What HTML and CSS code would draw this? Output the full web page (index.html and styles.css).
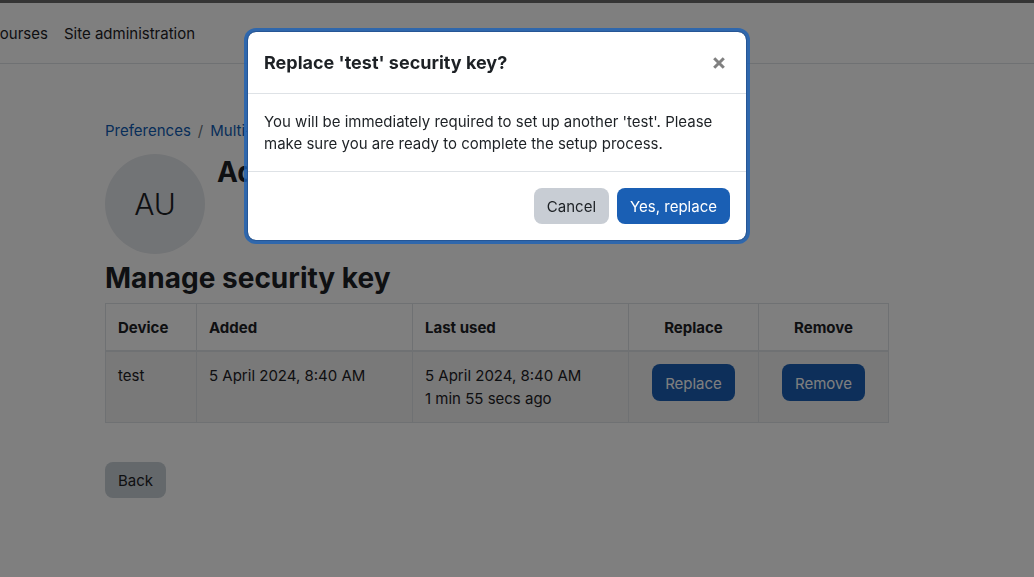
FILE: index.html
```html
<!DOCTYPE html>
<html lang="en">
<head>
  <meta charset="UTF-8" />
  <meta name="viewport" content="width=device-width, initial-scale=1" />
  <title>Manage security key</title>
  <link rel="stylesheet" href="styles.css">
</head>
<body>
  <header class="navbar">
    <nav class="primary-nav">
      <a href="#">My courses</a>
      <a href="#">Site administration</a>
    </nav>
  </header>

  <main class="page">
    <nav class="breadcrumb" aria-label="Breadcrumb">
      <a href="#">Preferences</a>
      <span class="divider">/</span>
      <a href="#">Multi-factor</a>
    </nav>

    <div class="user-header">
      <span class="avatar">AU</span>
      <h1>Admin User</h1>
    </div>

    <h2>Manage security key</h2>

    <table class="factors">
      <colgroup>
        <col class="col-device" />
        <col class="col-date" />
        <col class="col-date" />
        <col class="col-action" />
        <col class="col-action" />
      </colgroup>
      <thead>
        <tr>
          <th>Device</th>
          <th>Added</th>
          <th>Last used</th>
          <th class="action">Replace</th>
          <th class="action">Remove</th>
        </tr>
      </thead>
      <tbody>
        <tr>
          <td>test</td>
          <td>5 April 2024, 8:40 AM</td>
          <td>5 April 2024, 8:40 AM<br />1 min 55 secs ago</td>
          <td class="action"><button type="button" class="btn btn-primary">Replace</button></td>
          <td class="action"><button type="button" class="btn btn-primary">Remove</button></td>
        </tr>
      </tbody>
    </table>

    <button type="button" class="btn btn-back">Back</button>
  </main>

  <div class="modal-backdrop">
    <div class="modal" role="dialog" aria-modal="true" aria-labelledby="modal-title">
      <div class="modal-header">
        <h5 id="modal-title">Replace 'test' security key?</h5>
        <button type="button" class="close" aria-label="Close">
          <svg width="12" height="12" viewBox="0 0 12 12" aria-hidden="true">
            <path d="M1.2 1.2l9.6 9.6M10.8 1.2l-9.6 9.6" />
          </svg>
        </button>
      </div>
      <div class="modal-body">
        You will be immediately required to set up another 'test'. Please make sure you are ready to complete the setup process.
      </div>
      <div class="modal-footer">
        <button type="button" class="btn btn-secondary">Cancel</button>
        <button type="button" class="btn btn-primary">Yes, replace</button>
      </div>
    </div>
  </div>
</body>
</html>
```
FILE: styles.css
```css
* {
  box-sizing: border-box;
}
body {
  margin: 0;
  font-family: Inter, "Liberation Sans", sans-serif;
  font-size: 15px;
  line-height: 22px;
  color: #1d2125;
  background: white;
  border-top: 3px solid #6a6a6a;
}
a {
  color: #0f5cb4;
  text-decoration: none;
}
h1, h2, h5 {
  margin: 0;
  font-weight: 700;
}
h1, h2 {
  font-size: 28px;
  line-height: 36px;
}

/* Top bar */
.navbar {
  padding: 20px 0 18px;
  border-bottom: 1px solid #dee2e6;
  overflow: hidden;
}
.primary-nav {
  display: flex;
  gap: 16px;
  margin-left: -35px;
  white-space: nowrap;
}
.primary-nav a {
  color: #1d2125;
}

/* Page content */
.page {
  max-width: 824px;
  margin: 0 auto;
  padding: 56px 40px 0 0;
}
.breadcrumb {
  display: flex;
  gap: 7px;
  margin-bottom: 12px;
}
.divider {
  color: #6a737b;
}
.user-header {
  display: flex;
  gap: 12px;
  margin-bottom: 6px;
}
.avatar {
  display: flex;
  justify-content: center;
  align-items: center;
  width: 100px;
  height: 100px;
  border-radius: 50%;
  background: #e5e8ec;
  font-size: 30px;
  font-weight: 300;
}
.factors {
  width: 100%;
  margin: 7px 0 39px;
  border-collapse: collapse;
  table-layout: fixed;
  line-height: 23px;
}
.factors th,
.factors td {
  padding: 12px;
  border: 1px solid #dee2e6;
  text-align: left;
  vertical-align: top;
}
.factors thead th {
  padding-bottom: 11px;
  border-bottom-width: 2px;
}
.factors tbody tr {
  background: #f2f2f2;
}
.factors .action {
  text-align: center;
}
.col-device {
  width: 91px;
}
.col-date {
  width: 216px;
}

/* Buttons */
.btn {
  padding: 7px 12px 5px;
  font: inherit;
  border: 1px solid transparent;
  border-radius: 8px;
  cursor: pointer;
}
.btn-primary {
  color: white;
  background: #1a5fb4;
}
.btn-secondary {
  color: #1d2125;
  background: #c8cdd4;
}
.btn-back {
  color: #1d2125;
  background: #c8d0d6;
}

/* Confirmation dialog */
.modal-backdrop {
  position: fixed;
  inset: 0;
  display: flex;
  justify-content: center;
  align-items: flex-start;
  padding: 31px 40px 0 0;
  background: rgba(0,0,0,0.5);
}
.modal {
  width: 100%;
  max-width: 500px;
  background: white;
  background-clip: padding-box;
  border: 1px solid #265695;
  border-radius: 9px;
  box-shadow: 0 0 0 3px rgba(28,98,184,0.8);
}
.modal-header {
  display: flex;
  justify-content: space-between;
  align-items: center;
  padding: 16px;
  border-bottom: 1px solid #dee2e6;
}
.modal-header h5 {
  font-size: 18px;
  line-height: 29px;
}
.close {
  display: flex;
  padding: 6px 5px 5px;
  background: none;
  border: none;
  cursor: pointer;
}
.close svg {
  stroke: #808080;
  stroke-width: 3;
}
.modal-body {
  padding: 17px 16px 16px;
}
.modal-footer {
  display: flex;
  justify-content: flex-end;
  gap: 8px;
  padding: 16px;
  border-top: 1px solid #dee2e6;
}
```
